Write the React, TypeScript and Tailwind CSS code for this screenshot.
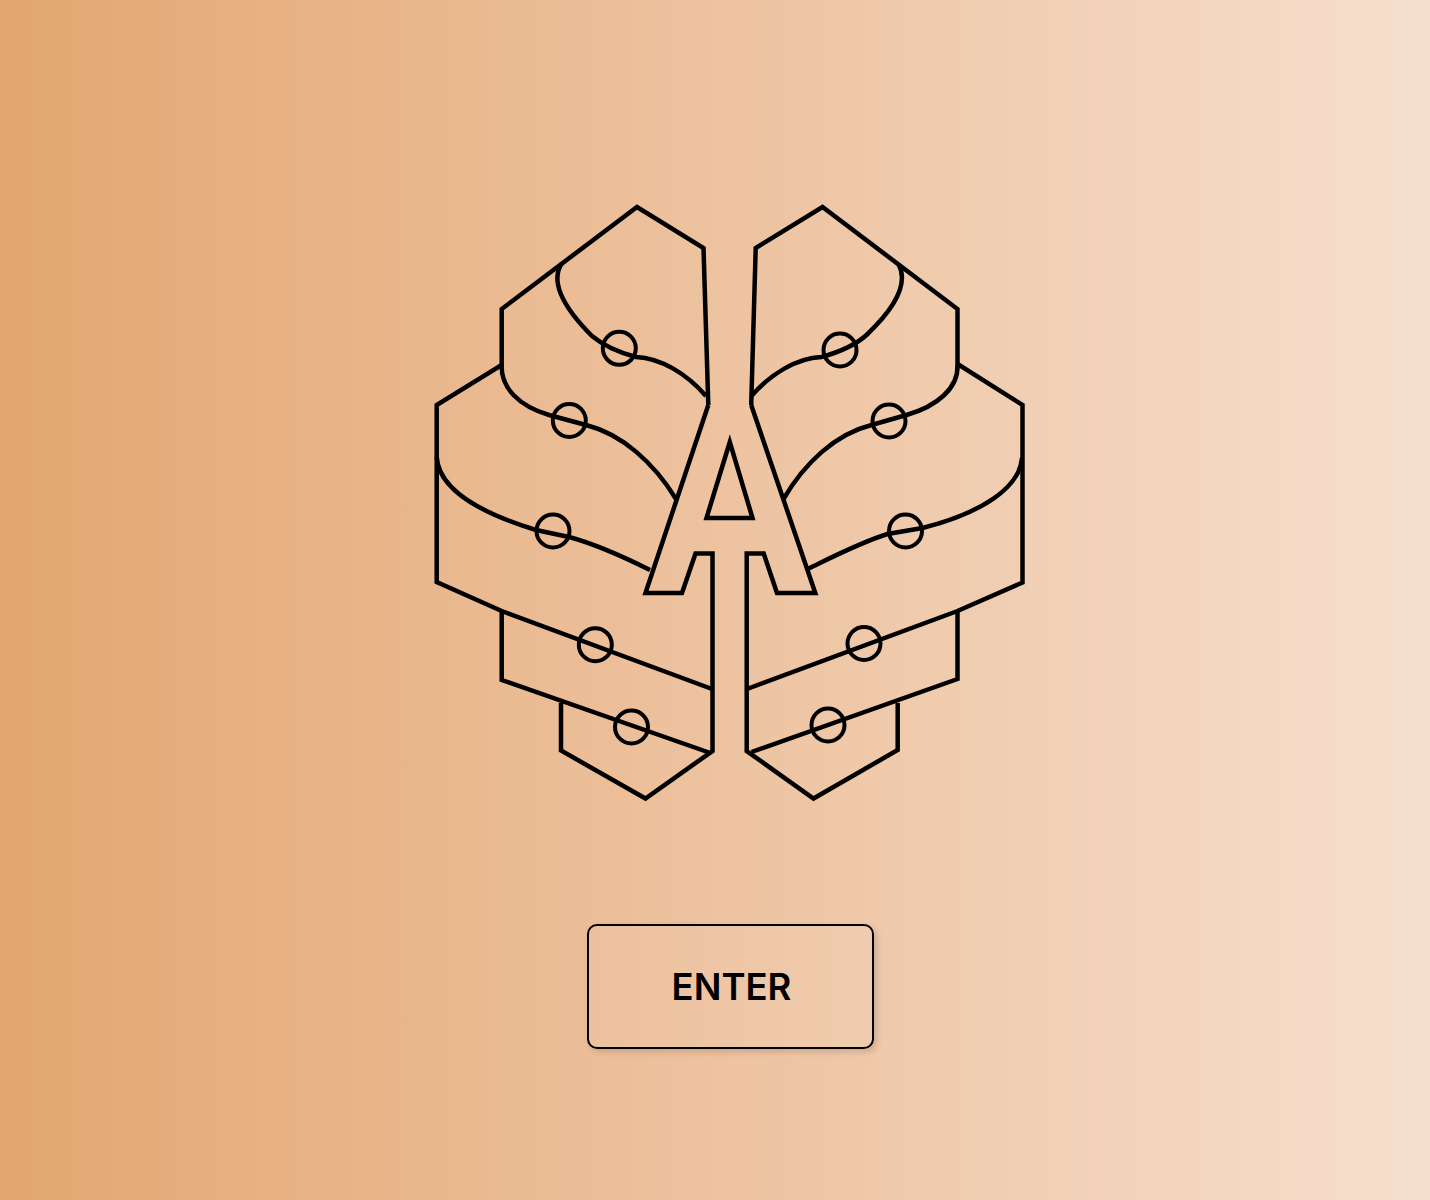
const lines = [
  // left half
  "M708.3 405 L703.5 248 L637 207 L501.7 309 L501.7 365 L436.7 405 L436.7 582 L501.7 611 L712 689",
  "M501.7 611 L501.7 680 L709 752.5",
  "M561 703 L561 750.5 L645.5 798.5 L712.5 751 L712.5 553.5 L695.5 553.5 L682 593 L645.5 593 L708.3 405",
  "M562 263 C552 278 556 300 592 336 C604 346 617 352 636 357 C661 358 687 374 706 396",
  "M501.7 365 C500.7 388 519 406 549 415 L586 425 C622 434 654 463 676 499",
  "M436.7 457 C438.7 488 477 512 536 530 L569 537 C595 544 624 557 650 570",
  // right half
  "M751.2 405 L755.7 248 L822.5 207 L957.5 309 L957.5 364 L1022.5 405 L1022.5 582.5 L957.5 611 L747 689",
  "M957.5 611 L957.5 679 L751.5 752",
  "M897.7 703 L897.7 750 L813.5 798.5 L746.7 751 L746.7 553.5 L763.7 553.5 L777 593 L815.3 593 L751.2 405",
  "M898.5 264 C906.5 279 902.5 301 866.5 335 C854.5 346 839.5 352 821.5 357 C796.5 358 770.5 374 751.5 396",
  "M957.5 365 C958.5 388 937.5 406 906.5 415 L871.5 425 C835.5 434 804.5 463 783.5 499",
  "M1022 458 C1019.5 488 981.5 513 922.5 528 L887.5 534 C861.5 542 834.5 556 807.5 569",
  // inner triangle of the A
  "M729.8 442 L706.5 518 L752.5 518 Z",
];

const rings = [
  [619.3, 348.3],
  [569.3, 420.5],
  [553, 531],
  [595.3, 644.7],
  [631.5, 727],
  [840, 350],
  [889, 421],
  [905.5, 531],
  [864, 643.5],
  [828, 725],
];

const BrainLogo = () => (
  <svg
    viewBox="430 200 600 606"
    className="h-[606px] w-[600px]"
    fill="none"
    stroke="#000"
    strokeWidth="4.5"
  >
    {lines.map((d) => (
      <path key={d} d={d} />
    ))}
    {rings.map(([cx, cy]) => (
      <circle key={cx} cx={cx} cy={cy} r="16.5" strokeWidth="4" />
    ))}
  </svg>
);

const App = () => {
  return (
    <div className="flex h-[1200px] flex-col items-center bg-gradient-to-r from-[#e3a670] to-[#f6dfce] pt-[200px] pl-[30px]">
      <BrainLogo />
      <button className="mt-[118px] flex h-[125px] w-[287px] items-center justify-center rounded-[10px] border-2 border-black bg-white/5 pt-[2px] pl-[3px] font-['Inter',sans-serif] text-[36.5px] font-semibold text-black shadow-[3px_3px_6px_rgba(0,0,0,0.15)]">
        ENTER
      </button>
    </div>
  );
};

export default App;
